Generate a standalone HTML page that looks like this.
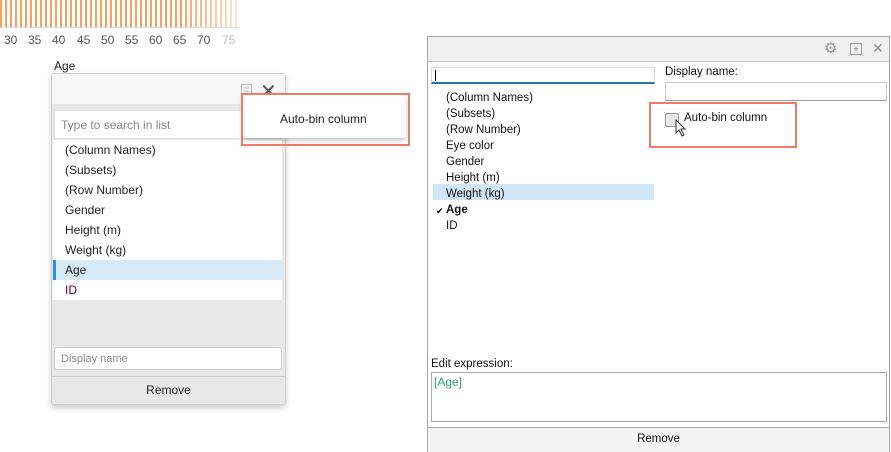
<!DOCTYPE html>
<html><head><style>
body{margin:0;width:891px;height:451px;overflow:hidden;background:#fff;font-family:"Liberation Sans",sans-serif;position:relative}
.a{position:absolute}
.l{font-size:12px;color:#222}
.r{font-size:11.5px;color:#111}
</style></head><body>
<div class="a" style="left:0;top:0;width:240px;height:28px;background:repeating-linear-gradient(90deg,#f7a060 0 2px,transparent 2px 5px)"></div>
<div class="a" style="left:180px;top:0;width:60px;height:28px;background:linear-gradient(90deg,rgba(255,255,255,0),rgba(255,255,255,.75))"></div>
<div class="a" style="left:0;top:27px;width:240px;height:1px;background:#ddd"></div>
<div class="a" style="left:4px;top:33px;font-size:12px;color:#555">
<span class="a" style="left:0">30</span><span class="a" style="left:24px">35</span><span class="a" style="left:48px">40</span><span class="a" style="left:73px">45</span><span class="a" style="left:97px">50</span><span class="a" style="left:121px">55</span><span class="a" style="left:145px">60</span><span class="a" style="left:169px">65</span><span class="a" style="left:193px">70</span><span class="a" style="left:218px;color:#bbb">75</span></div>
<div class="a l" style="left:54px;top:59px">Age</div>
<div class="a" style="left:51px;top:73px;width:233px;height:330px;border:1px solid #d0d0d0;border-radius:3px;background:#e8e8e8;box-shadow:0 3px 6px rgba(0,0,0,.2)">
 <div class="a" style="left:0;top:0;width:233px;height:30px;background:#f6f6f6"></div>
 <svg class="a" style="left:189px;top:10px" width="12" height="14"><rect x="0.5" y="0.5" width="10" height="12" fill="none" stroke="#bbb"/><path d="M3 4h5M3 7h5M3 10h5" stroke="#bbb"/></svg>
 <div class="a" style="left:208px;top:5px;font-size:20px;color:#555">✕</div>
 <div class="a" style="left:2px;top:36px;width:228px;height:29px;background:#fff;border:1px solid #e0e0e0;box-sizing:border-box"></div>
 <div class="a l" style="left:9px;top:44px;color:#888">Type to search in list</div>
 <div class="a" style="left:1px;top:66px;width:229px;height:160px;background:#fff"></div>
 <div class="a" style="left:1px;top:186px;width:229px;height:20px;background:#d6eaf8"></div>
 <div class="a" style="left:1px;top:186px;width:3px;height:20px;background:#2a95e0"></div>
 <div class="a l" style="left:13px;top:66px;line-height:20px">(Column Names)<br>(Subsets)<br>(Row Number)<br>Gender<br>Height (m)<br>Weight (kg)<br>Age<br><span style="color:#5a0030">ID</span></div>
 <div class="a" style="left:2px;top:273px;width:228px;height:23px;background:#fff;border:1px solid #ccc;border-radius:3px;box-sizing:border-box"></div>
 <div class="a" style="left:9px;top:279px;font-size:11px;color:#888">Display name</div>
 <div class="a" style="left:0;top:302px;width:233px;height:1px;background:#ccc"></div>
 <div class="a l" style="left:0;top:309px;width:233px;text-align:center">Remove</div>
</div>
<div class="a" style="left:243px;top:95px;width:163px;height:43px;background:#fff;box-shadow:0 2px 5px rgba(0,0,0,.25);border-radius:3px"></div>
<div class="a l" style="left:280px;top:112px">Auto-bin column</div>
<div class="a" style="left:241px;top:93px;width:165px;height:49px;border:2px solid #f07a6a"></div>
<div class="a" style="left:427px;top:36px;width:461px;height:414px;border:1px solid #a8a8a8;background:#fff">
 <div class="a" style="left:0;top:0;width:461px;height:24px;background:#f0f0f0;border-bottom:1px solid #c8c8c8"></div>
 <div class="a" style="left:396px;top:2px;font-size:15px;color:#999">⚙</div>
 <div class="a" style="left:422px;top:6px;width:10px;height:10px;border:1px solid #999;font-size:9px;line-height:10px;text-align:center;color:#666">+</div>
 <div class="a" style="left:444px;top:3px;font-size:14px;color:#888">✕</div>
 <div class="a" style="left:3px;top:30px;width:224px;height:17px;border:1px solid #ddd;border-bottom:2px solid #2a6fb8;box-sizing:border-box"></div>
 <div class="a" style="left:7px;top:33px;width:1px;height:11px;background:#000"></div>
 <div class="a" style="left:5px;top:147px;width:221px;height:16px;background:#d3e6f5"></div>
 <div class="a r" style="left:18px;top:53px;line-height:16px">(Column Names)<br>(Subsets)<br>(Row Number)<br>Eye color<br>Gender<br>Height (m)<br>Weight (kg)<br><b>Age</b><br>ID</div>
 <div class="a" style="left:8px;top:169px;font-size:9px">✔</div>
 <div class="a r" style="left:237px;top:29px">Display name:</div>
 <div class="a" style="left:237px;top:45px;width:222px;height:19px;border:1px solid #ccc;border-bottom-color:#999;box-sizing:border-box"></div>
 <div class="a" style="left:237px;top:76px;width:12px;height:12px;border:1px solid #999;border-radius:2px;background:#e8e8e8"></div>
 <div class="a r" style="left:256px;top:75px">Auto-bin column</div>
 <svg class="a" style="left:247px;top:82px" width="12" height="18"><path d="M1 1 L1 14 L4 11 L7 17 L9 16 L6 10 L10 10 Z" fill="#fff" stroke="#333" stroke-width="1"/></svg>
 <div class="a" style="left:221px;top:65px;width:144px;height:42px;border:2px solid #f07a6a"></div>
 <div class="a r" style="left:3px;top:321px">Edit expression:</div>
 <div class="a" style="left:3px;top:335px;width:456px;height:50px;border:1px solid #aaa;box-sizing:border-box"></div>
 <div class="a" style="left:6px;top:338px;font-size:12px;color:#3a9a7a">[Age]</div>
 <div class="a" style="left:0;top:390px;width:461px;height:24px;background:#f4f4f4;border-top:1px solid #aaa"></div>
 <div class="a r" style="left:0;top:396px;width:461px;text-align:center">Remove</div>
</div>
</body></html>
